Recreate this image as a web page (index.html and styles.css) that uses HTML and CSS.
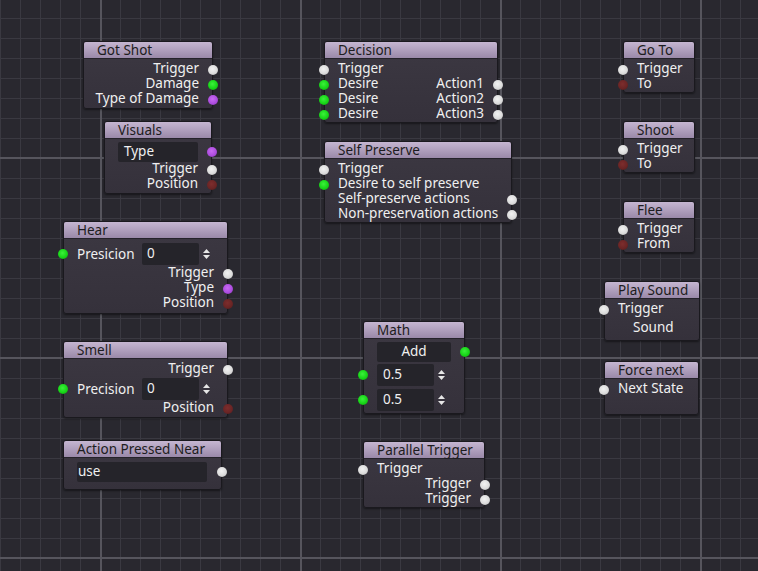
FILE: index.html
```html
<!DOCTYPE html>
<html>
<head>
<meta charset="utf-8">
<title>Graph</title>
<link rel="stylesheet" href="styles.css">
</head>
<body>
<div class="canvas">

  <div class="node n-gotshot">
    <div class="hdr">Got Shot</div>
    <div class="body pb1">
      <div class="row r">Trigger<i class="port pr w"></i></div>
      <div class="row r">Damage<i class="port pr g"></i></div>
      <div class="row r">Type of Damage<i class="port pr p"></i></div>
    </div>
  </div>

  <div class="node n-visuals">
    <div class="hdr">Visuals</div>
    <div class="body pb1">
      <div class="row frow"><div class="field f-type">Type</div><i class="port pr p"></i></div>
      <div class="row r">Trigger<i class="port pr w"></i></div>
      <div class="row r">Position<i class="port pr d"></i></div>
    </div>
  </div>

  <div class="node n-hear">
    <div class="hdr">Hear</div>
    <div class="body pb2">
      <div class="row srow"><i class="port pl g"></i><span class="lbl">Presicion</span><div class="field f-spin">0</div><span class="arrows"><svg width="7" height="12" viewBox="0 0 7 12"><polygon points="0,5 3.5,1 7,5" fill="#e6e6e6"/><polygon points="0,7 3.5,11 7,7" fill="#e6e6e6"/></svg></span></div>
      <div class="row r">Trigger<i class="port pr w"></i></div>
      <div class="row r">Type<i class="port pr p"></i></div>
      <div class="row r">Position<i class="port pr d"></i></div>
    </div>
  </div>

  <div class="node n-smell">
    <div class="hdr">Smell</div>
    <div class="body pb1">
      <div class="row r">Trigger<i class="port pr w"></i></div>
      <div class="row srow"><i class="port pl g"></i><span class="lbl">Precision</span><div class="field f-spin">0</div><span class="arrows"><svg width="7" height="12" viewBox="0 0 7 12"><polygon points="0,5 3.5,1 7,5" fill="#e6e6e6"/><polygon points="0,7 3.5,11 7,7" fill="#e6e6e6"/></svg></span></div>
      <div class="row r">Position<i class="port pr d"></i></div>
    </div>
  </div>

  <div class="node n-action">
    <div class="hdr">Action Pressed Near</div>
    <div class="body pt4 pb7">
      <div class="row frow"><div class="field f-use">use</div><i class="port pr w"></i></div>
    </div>
  </div>

  <div class="node n-decision">
    <div class="hdr">Decision</div>
    <div class="body pb0">
      <div class="row"><i class="port pl w"></i>Trigger</div>
      <div class="row sb"><i class="port pl g"></i><span>Desire</span><span>Action1</span><i class="port pr w"></i></div>
      <div class="row sb"><i class="port pl g"></i><span>Desire</span><span>Action2</span><i class="port pr w"></i></div>
      <div class="row sb"><i class="port pl g"></i><span>Desire</span><span>Action3</span><i class="port pr w"></i></div>
    </div>
  </div>

  <div class="node n-self">
    <div class="hdr">Self Preserve</div>
    <div class="body pb0">
      <div class="row"><i class="port pl w"></i>Trigger</div>
      <div class="row"><i class="port pl g"></i>Desire to self preserve</div>
      <div class="row">Self-preserve actions<i class="port pr w"></i></div>
      <div class="row">Non-preservation actions<i class="port pr w"></i></div>
    </div>
  </div>

  <div class="node n-math">
    <div class="hdr">Math</div>
    <div class="body pb1">
      <div class="row frow"><div class="field f-add">Add</div><i class="port pr g"></i></div>
      <div class="row srow mt1"><i class="port pl g"></i><div class="field f-num">0.5</div><span class="arrows"><svg width="7" height="12" viewBox="0 0 7 12"><polygon points="0,5 3.5,1 7,5" fill="#e6e6e6"/><polygon points="0,7 3.5,11 7,7" fill="#e6e6e6"/></svg></span></div>
      <div class="row srow mt1"><i class="port pl g"></i><div class="field f-num">0.5</div><span class="arrows"><svg width="7" height="12" viewBox="0 0 7 12"><polygon points="0,5 3.5,1 7,5" fill="#e6e6e6"/><polygon points="0,7 3.5,11 7,7" fill="#e6e6e6"/></svg></span></div>
    </div>
  </div>

  <div class="node n-parallel">
    <div class="hdr">Parallel Trigger</div>
    <div class="body pb0">
      <div class="row"><i class="port pl w"></i>Trigger</div>
      <div class="row r">Trigger<i class="port pr w"></i></div>
      <div class="row r">Trigger<i class="port pr w"></i></div>
    </div>
  </div>

  <div class="node n-goto">
    <div class="hdr">Go To</div>
    <div class="body pb0">
      <div class="row"><i class="port pl w"></i>Trigger</div>
      <div class="row"><i class="port pl d"></i>To</div>
    </div>
  </div>

  <div class="node n-shoot">
    <div class="hdr">Shoot</div>
    <div class="body pb0">
      <div class="row"><i class="port pl w"></i>Trigger</div>
      <div class="row"><i class="port pl d"></i>To</div>
    </div>
  </div>

  <div class="node n-flee">
    <div class="hdr">Flee</div>
    <div class="body pb0">
      <div class="row"><i class="port pl w"></i>Trigger</div>
      <div class="row"><i class="port pl d"></i>From</div>
    </div>
  </div>

  <div class="node n-sound">
    <div class="hdr">Play Sound</div>
    <div class="body pb3">
      <div class="row"><i class="port pl w"></i>Trigger</div>
      <div class="row frow sound">Sound</div>
    </div>
  </div>

  <div class="node n-force">
    <div class="hdr">Force next</div>
    <div class="body pb17">
      <div class="row"><i class="port pl w"></i>Next State</div>
    </div>
  </div>

</div>
</body>
</html>
```

FILE: styles.css
```css
html, body {
  margin: 0;
  padding: 0;
}

body {
  width: 758px;
  height: 571px;
  overflow: hidden;
  background-color: #29282f;
  background-image:
    linear-gradient(to right, #56555d 0, #56555d 2px, transparent 2px),
    linear-gradient(to bottom, #56555d 0, #56555d 2px, transparent 2px),
    linear-gradient(to right, #3a3941 0, #3a3941 1px, transparent 1px),
    linear-gradient(to bottom, #3a3941 0, #3a3941 1px, transparent 1px);
  background-size: 200px 100%, 100% 200px, 20px 100%, 100% 20px;
  background-position: 100px 0, 0 157px, 20px 0, 0 18px;
}

.canvas {
  position: relative;
  width: 758px;
  height: 571px;
  font-family: "Noto Sans", "DejaVu Sans", sans-serif;
  font-size: 13.5px;
  color: #f0f0f0;
}

.node {
  position: absolute;
  box-sizing: border-box;
  border: 1px solid #1a191e;
  border-radius: 3px;
  background: linear-gradient(#3c3842, #35313b);
  box-shadow: 0 1px 2px rgba(0, 0, 0, 0.45);
}

.hdr {
  height: 16px;
  line-height: 16px;
  padding-left: 13px;
  border-bottom: 1px solid #25232a;
  border-radius: 2px 2px 0 0;
  background: linear-gradient(#c5b6d1, #9a89a9);
  color: #1d1c20;
  white-space: nowrap;
}

.body {
  padding: 3px 0 1px;
}
.pb0 { padding-bottom: 0; }
.pb1 { padding-bottom: 1px; }
.pb2 { padding-bottom: 2px; }
.pb3 { padding-bottom: 3px; }
.pb7 { padding-bottom: 7px; }
.pb17 { padding-bottom: 17px; }
.pt4 { padding-top: 4px; }
.mt1 { margin-top: 1px; }

.row {
  position: relative;
  box-sizing: border-box;
  display: flex;
  align-items: center;
  height: 15px;
  line-height: 13px;
  padding: 0 13px 2px;
  white-space: nowrap;
}
.row.r { justify-content: flex-end; }
.row.sb { justify-content: space-between; }
.row.frow { height: 20px; padding-bottom: 0; }
.row.srow { height: 24px; padding-bottom: 0; }

.lbl { flex: 1; }

.field {
  box-sizing: border-box;
  height: 20px;
  line-height: 19px;
  background: #25242a;
  border-radius: 2px;
  color: #f0f0f0;
}
.srow .field { height: 22px; line-height: 21px; }

.f-type { width: 80px; padding-left: 6px; }
.f-use { width: 130px; padding-left: 1px; }
.f-add { width: 74px; text-align: center; }
.f-spin { width: 57px; padding-left: 5px; }
.f-num { width: 57px; padding-left: 6px; }

.arrows {
  display: flex;
  justify-content: center;
  align-items: center;
  width: 15px;
  height: 22px;
}
.arrows svg { display: block; }

.sound { padding-left: 28px; line-height: 19px; }

.port {
  position: absolute;
  top: 50%;
  width: 10px;
  height: 10px;
  margin-top: -5px;
  border-radius: 50%;
}
.pl { left: -6px; }
.pr { right: -6px; }
.w { background: radial-gradient(circle at 45% 40%, #f2f2f2 0, #dcdcdc 55%, #a9a9a9 100%); }
.g { background: radial-gradient(circle at 45% 40%, #3cf03c 0, #17d517 55%, #0d9a0d 100%); }
.p { background: radial-gradient(circle at 45% 40%, #c86af2 0, #ad4ddf 55%, #7f2fa8 100%); }
.d { background: radial-gradient(circle at 45% 40%, #7d2d2d 0, #6a2525 55%, #4d1a1a 100%); }

.n-gotshot  { left: 83px;  top: 41px;  width: 130px; }
.n-visuals  { left: 104px; top: 121px; width: 108px; }
.n-hear     { left: 63px;  top: 221px; width: 165px; }
.n-smell    { left: 63px;  top: 341px; width: 165px; }
.n-action   { left: 63px;  top: 440px; width: 159px; }
.n-decision { left: 324px; top: 41px;  width: 174px; }
.n-self     { left: 324px; top: 141px; width: 188px; }
.n-math     { left: 363px; top: 321px; width: 102px; }
.n-parallel { left: 363px; top: 441px; width: 122px; }
.n-goto     { left: 623px; top: 41px;  width: 72px; }
.n-shoot    { left: 623px; top: 121px; width: 72px; }
.n-flee     { left: 623px; top: 201px; width: 72px; }
.n-sound    { left: 604px; top: 281px; width: 96px; }
.n-force    { left: 604px; top: 361px; width: 95px; }
```
